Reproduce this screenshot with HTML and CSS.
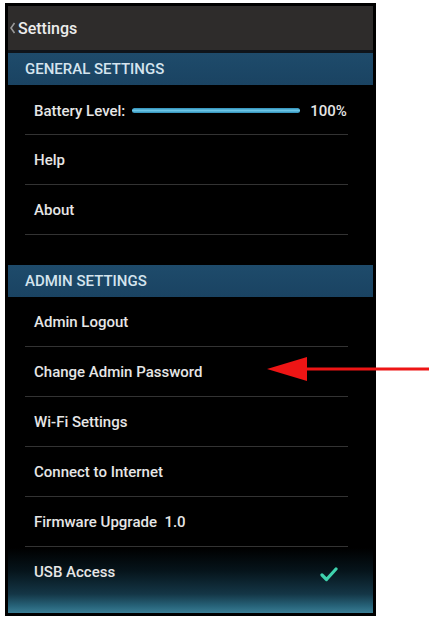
FILE: index.html
```html
<!DOCTYPE html>
<html>
<head>
<meta charset="utf-8">
<link rel="stylesheet" href="styles.css">
</head>
<body>
<div class="page">
  <div class="device">
    <div class="titlebar">
      <svg class="chev" width="6" height="12" viewBox="0 0 6 12"><polyline points="4.5,1 1,6 4.5,11" fill="none" stroke="#9a9a9a" stroke-width="1.6"/></svg>
      <span class="title">Settings</span>
    </div>
    <div class="section-header">GENERAL SETTINGS</div>
    <div class="row battery">
      <span class="label">Battery Level:</span>
      <span class="bar"></span>
      <span class="pct">100%</span>
    </div>
    <div class="row">Help</div>
    <div class="row">About</div>
    <div class="gap"></div>
    <div class="section-header">ADMIN SETTINGS</div>
    <div class="row">Admin Logout</div>
    <div class="row">Change Admin Password</div>
    <div class="row">Wi-Fi Settings</div>
    <div class="row">Connect to Internet</div>
    <div class="row">Firmware Upgrade&nbsp;&nbsp;1.0</div>
    <div class="row last">
      <span>USB Access</span>
      <svg class="check" width="18" height="16" viewBox="0 0 18 16"><polyline points="2,9 6.5,13.5 16,3" fill="none" stroke="#3fd2ad" stroke-width="3.2" stroke-linecap="round" stroke-linejoin="round"/></svg>
    </div>
  </div>
  <svg class="arrow" width="163" height="26" viewBox="0 0 163 26">
    <polygon points="1,13 41,1 41,25" fill="#ee1515"/>
    <rect x="40" y="11.5" width="123" height="3" fill="#ee1515"/>
  </svg>
</div>
</body>
</html>
```
FILE: styles.css
```css
html, body {
  margin: 0;
  padding: 0;
  background: #ffffff;
}
body {
  font-family: Roboto, "Noto Sans", "Liberation Sans", sans-serif;
}
.page {
  position: relative;
  padding: 3px 0 0 5px;
  height: 617px;
}
.device {
  width: 365px;
  height: 607px;
  border: 3px solid #000;
  display: flex;
  flex-direction: column;
  background: linear-gradient(to bottom, #000 0, #000 542px, #06141b 565px, #143646 588px, #276379 600px, #3a7d94 607px);
  color: #e6e6e6;
  overflow: hidden;
}
.titlebar {
  height: 44px;
  flex: none;
  background: #2e2c2b;
  border-bottom: 3px solid #0f141a;
  display: flex;
  align-items: center;
  padding-left: 2px;
}
.chev {
  margin-right: 2px;
}
.title {
  font-size: 16px;
  font-weight: 500;
  color: #ececec;
}
.section-header {
  height: 32px;
  flex: none;
  background: linear-gradient(to bottom, #1e4b6b, #1a4362);
  color: #d4e4ee;
  font-size: 15px;
  font-weight: 500;
  display: flex;
  align-items: center;
  padding-left: 17px;
}
.row {
  height: 49px;
  flex: none;
  margin: 0 25px 0 17px;
  padding-left: 9px;
  border-bottom: 1px solid #333;
  display: flex;
  align-items: center;
  font-size: 15px;
  font-weight: 500;
  white-space: nowrap;
}
.row.battery {
  padding-top: 2px;
  height: 47px;
}
.row.last {
  border-bottom: none;
  justify-content: space-between;
}
.label {
  flex: none;
}
.check {
  margin-right: 10px;
  margin-top: 4px;
}
.gap {
  height: 30px;
  flex: none;
}
.bar {
  flex: none;
  width: 168px;
  height: 5px;
  margin-left: 7px;
  border-radius: 3px;
  background: linear-gradient(to bottom, #2f8fb8, #6cc6e6 50%, #2f8fb8);
}
.pct {
  flex: none;
  margin-left: 10px;
}
.arrow {
  position: absolute;
  left: 266px;
  top: 356px;
}
```
